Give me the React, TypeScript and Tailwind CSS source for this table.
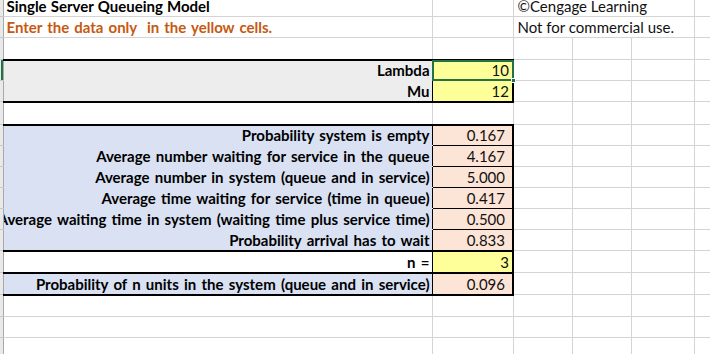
import React from "react";

const G = "p-0 border border-[#d4d4d4]";

function Hdr({ sel = false }: { sel?: boolean }) {
  return (
    <td className="relative p-0 bg-[#e9e9e9] border-y border-y-[#c8c8c8] border-r border-r-[#a8a8a8] border-l-0">
      {sel && <div className="absolute right-0 top-0 bottom-0 w-[2px] bg-[#217346]" />}
    </td>
  );
}

function Empty({ n = 1 }: { n?: number }) {
  return (
    <>
      {Array.from({ length: n }).map((_, i) => (
        <td key={i} className={G} />
      ))}
    </>
  );
}

function Label({ text, bg, top = false, bottom = false }: { text: string; bg: string; top?: boolean; bottom?: boolean }) {
  return (
    <td
      className={`p-0 align-bottom border border-[#d4d4d4] border-r-black ${bg} ${top ? "border-t-2 border-t-black" : ""} ${bottom ? "border-b-2 border-b-black" : ""}`}
    >
      <div className="flex justify-end overflow-hidden whitespace-nowrap pr-[2px] pb-[1px] leading-[17px] font-bold [word-spacing:1.6px]">
        <span className="shrink-0">{text}</span>
      </div>
    </td>
  );
}

function Val({
  text,
  bg,
  pr,
  top = false,
  bottom = false,
  sel = false,
  lines = true,
}: {
  text: string;
  bg: string;
  pr: string;
  top?: boolean;
  bottom?: boolean;
  sel?: boolean;
  lines?: boolean;
}) {
  return (
    <td
      className={`relative p-0 align-bottom border ${lines ? "border-black" : "border-transparent border-l-black"} border-r-2 border-r-black ${bg} ${top ? "border-t-2 border-t-black" : ""} ${bottom ? "border-b-2 border-b-black" : ""}`}
    >
      <div className={`text-right whitespace-nowrap pb-[1px] leading-[17px] text-[#111] ${pr}`}>{text}</div>
      {sel && (
        <>
          <div className="absolute -left-[1px] -top-[1px] -right-[2px] -bottom-[1px] border-2 border-[#217346]" />
          <div className="absolute -right-[4px] -bottom-[3px] w-[5px] h-[5px] bg-[#217346] border border-white" />
        </>
      )}
    </td>
  );
}

export default function App() {
  return (
    <div className="w-[710px] h-[354px] overflow-hidden bg-white font-['Lato',sans-serif] text-[15px] text-black">
      <table className="table-fixed border-collapse -mt-[5px] w-[740px]">
        <colgroup>
          <col className="w-[3px]" />
          <col className="w-[429px]" />
          <col className="w-[81px]" />
          <col className="w-[59px]" />
          <col className="w-[59px]" />
          <col className="w-[63px]" />
          <col className="w-[46px]" />
        </colgroup>
        <tbody>
          {/* Row 1 */}
          <tr className="h-[21px]">
            <Hdr />
            <td className={`${G} align-bottom`}>
              <div className="pl-[3px] pb-[1px] leading-[17px] font-bold whitespace-nowrap [word-spacing:0.5px]">Single Server Queueing Model</div>
            </td>
            <td className={G} />
            <td colSpan={3} className={`${G} align-bottom`}>
              <div className="pl-[4px] pb-[1px] leading-[17px] whitespace-nowrap text-[#111]">©Cengage Learning</div>
            </td>
            <td className={G} />
          </tr>
          {/* Row 2 */}
          <tr className="h-[21px]">
            <Hdr />
            <td className={`${G} align-bottom`}>
              <div className="pl-[3px] pb-[1px] leading-[17px] font-bold whitespace-nowrap text-[#c65911] [word-spacing:1.4px]">
                Enter the data only&nbsp; in the yellow cells.
              </div>
            </td>
            <td className={G} />
            <td colSpan={3} className={`${G} align-bottom`}>
              <div className="pl-[4px] pb-[1px] leading-[17px] whitespace-nowrap text-[#111]">Not for commercial use.</div>
            </td>
            <td className={G} />
          </tr>
          {/* Row 3 */}
          <tr className="h-[22px]">
            <Hdr />
            <Empty n={6} />
          </tr>
          {/* Row 4 Lambda */}
          <tr className="h-[21px]">
            <Hdr sel />
            <Label text="Lambda" bg="bg-[#ededed] border-b-[#ededed]" top />
            <Val text="10" bg="bg-[#ffff99]" pr="pr-[3px]" top sel lines={false} />
            <Empty n={4} />
          </tr>
          {/* Row 5 Mu */}
          <tr className="h-[21px]">
            <Hdr />
            <Label text="Mu" bg="bg-[#ededed]" bottom />
            <Val text="12" bg="bg-[#ffff99]" pr="pr-[3px]" bottom lines={false} />
            <Empty n={4} />
          </tr>
          {/* Row 6 */}
          <tr className="h-[23px]">
            <Hdr />
            <Empty n={6} />
          </tr>
          {/* Rows 7-12 */}
          <tr className="h-[21px]">
            <Hdr />
            <Label text="Probability system is empty" bg="bg-[#d9e1f2] border-b-[#d9e1f2]" top />
            <Val text="0.167" bg="bg-[#fce4d6]" pr="pr-[7px]" top />
            <Empty n={4} />
          </tr>
          <tr className="h-[21px]">
            <Hdr />
            <Label text="Average number waiting for service in the queue" bg="bg-[#d9e1f2] border-b-[#d9e1f2]" />
            <Val text="4.167" bg="bg-[#fce4d6]" pr="pr-[7px]" />
            <Empty n={4} />
          </tr>
          <tr className="h-[21px]">
            <Hdr />
            <Label text="Average number in system (queue and in service)" bg="bg-[#d9e1f2] border-b-[#d9e1f2]" />
            <Val text="5.000" bg="bg-[#fce4d6]" pr="pr-[7px]" />
            <Empty n={4} />
          </tr>
          <tr className="h-[21px]">
            <Hdr />
            <Label text="Average time waiting for service (time in queue)" bg="bg-[#d9e1f2] border-b-[#d9e1f2]" />
            <Val text="0.417" bg="bg-[#fce4d6]" pr="pr-[7px]" />
            <Empty n={4} />
          </tr>
          <tr className="h-[21px]">
            <Hdr />
            <Label text="Average waiting time in system (waiting time plus service time)" bg="bg-[#d9e1f2] border-b-[#d9e1f2]" />
            <Val text="0.500" bg="bg-[#fce4d6]" pr="pr-[7px]" />
            <Empty n={4} />
          </tr>
          <tr className="h-[21px]">
            <Hdr />
            <Label text="Probability arrival has to wait" bg="bg-[#d9e1f2]" bottom />
            <Val text="0.833" bg="bg-[#fce4d6]" pr="pr-[7px]" bottom />
            <Empty n={4} />
          </tr>
          {/* Row 13 n = */}
          <tr className="h-[22px]">
            <Hdr />
            <Label text="n =" bg="bg-white border-t-white border-b-white" />
            <Val text="3" bg="bg-[#ffff99]" pr="pr-[3px]" />
            <Empty n={4} />
          </tr>
          {/* Row 14 */}
          <tr className="h-[22px]">
            <Hdr />
            <Label text="Probability of n units in the system (queue and in service)" bg="bg-[#d9e1f2]" top bottom />
            <Val text="0.096" bg="bg-[#fce4d6]" pr="pr-[7px]" top bottom />
            <Empty n={4} />
          </tr>
          <tr className="h-[22px]">
            <Hdr />
            <Empty n={6} />
          </tr>
          <tr className="h-[21px]">
            <Hdr />
            <Empty n={6} />
          </tr>
          <tr className="h-[21px]">
            <Hdr />
            <Empty n={6} />
          </tr>
        </tbody>
      </table>
    </div>
  );
}
